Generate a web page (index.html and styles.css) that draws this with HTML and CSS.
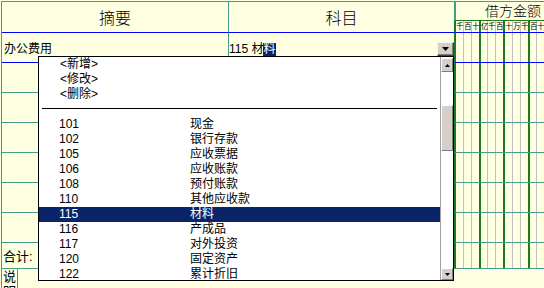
FILE: index.html
```html
<!DOCTYPE html>
<html lang="zh-CN">
<head>
<meta charset="utf-8">
<title>凭证录入</title>
<link rel="stylesheet" href="styles.css">
</head>
<body>
<div class="sheet">
  <div class="cell head c1">摘要</div>
  <div class="cell head c2">科目</div>
  <div class="amt-head">
    <div class="amt-title">借方金额</div>
    <div class="digits labels">
      <span>千</span><span>百</span><span>十</span><span>亿</span><span>千</span><span>百</span><span>十</span><span>万</span><span>千</span><span>百</span><span>十</span>
    </div>
  </div>

  <div class="cell first c1 text">办公费用</div>
  <div class="cell first c2 combo">
    <span class="combo-text">115 材<span class="mark">料</span></span>
    <span class="combo-btn"><svg width="7" height="4" viewBox="0 0 7 4"><polygon points="0,0 7,0 3.5,4" fill="#000"/></svg></span>
  </div>
  <div class="digits first"></div>

  <div class="cell c1"></div><div class="cell c2"></div><div class="digits"></div>
  <div class="cell c1"></div><div class="cell c2"></div><div class="digits"></div>
  <div class="cell c1"></div><div class="cell c2"></div><div class="digits"></div>
  <div class="cell c1"></div><div class="cell c2"></div><div class="digits"></div>
  <div class="cell c1"></div><div class="cell c2"></div><div class="digits"></div>
  <div class="cell c1"></div><div class="cell c2"></div><div class="digits"></div>

  <div class="cell c1 total">合计:</div>
  <div class="cell c2"></div>
  <div class="digits"></div>

  <div class="remark">
    <div class="remark-label">说明</div>
    <div class="remark-body"></div>
  </div>
</div>

<div class="dropdown">
  <div class="options">
    <div class="cmd">&lt;新增&gt;</div>
    <div class="cmd">&lt;修改&gt;</div>
    <div class="cmd">&lt;删除&gt;</div>
    <div class="sep"></div>
    <div class="item"><span class="code">101</span><span class="name">现金</span></div>
    <div class="item"><span class="code">102</span><span class="name">银行存款</span></div>
    <div class="item"><span class="code">105</span><span class="name">应收票据</span></div>
    <div class="item"><span class="code">106</span><span class="name">应收账款</span></div>
    <div class="item"><span class="code">108</span><span class="name">预付账款</span></div>
    <div class="item"><span class="code">110</span><span class="name">其他应收款</span></div>
    <div class="item selected"><span class="code">115</span><span class="name">材料</span></div>
    <div class="item"><span class="code">116</span><span class="name">产成品</span></div>
    <div class="item"><span class="code">117</span><span class="name">对外投资</span></div>
    <div class="item"><span class="code">120</span><span class="name">固定资产</span></div>
    <div class="item"><span class="code">122</span><span class="name">累计折旧</span></div>
  </div>
  <div class="scrollbar">
    <div class="sb-btn sb-up"><svg width="5" height="3" viewBox="0 0 5 3"><polygon points="0,3 5,3 2.5,0" fill="#000"/></svg></div>
    <div class="sb-track"><div class="sb-thumb"></div></div>
    <div class="sb-btn sb-down"><svg width="5" height="3" viewBox="0 0 5 3"><polygon points="0,0 5,0 2.5,3" fill="#000"/></svg></div>
  </div>
</div>
</body>
</html>
```

FILE: styles.css
```css
:root {
  --teal: #449c8c;
  --green: #1e781e;
  --blue: #0000ff;
  --thin: #c0c0c0;
  --paper: #ffffe1;
  --grid: linear-gradient(to right,
    transparent 0 7px, var(--thin) 7px 8px,
    transparent 8px 15px, var(--thin) 15px 16px,
    transparent 16px 23px, var(--green) 23px 25px,
    transparent 25px 31px, var(--thin) 31px 32px,
    transparent 32px 39px, var(--thin) 39px 40px,
    transparent 40px 47px, var(--green) 47px 49px,
    transparent 49px 56px, var(--thin) 56px 57px,
    transparent 57px 64px, var(--thin) 64px 65px,
    transparent 65px 72px, var(--green) 72px 74px,
    transparent 74px 80px, var(--thin) 80px 81px,
    transparent 81px 88px, var(--thin) 88px 89px,
    transparent 89px);
}

* { box-sizing: border-box; }

html, body { margin: 0; padding: 0; }

body {
  width: 544px;
  height: 288px;
  overflow: hidden;
  background: var(--paper);
  color: #000;
  font-family: "Liberation Sans", "Noto Sans CJK SC", sans-serif;
}

.sheet {
  margin: 1px 0 0 1px;
  width: 543px;
  height: 287px;
  border-top: 1px solid var(--teal);
  border-left: 1px solid var(--teal);
  display: grid;
  grid-template-columns: 227px 225px 90px;
  grid-template-rows: 31px 30px repeat(6, 30px) 26px 1fr;
  overflow: hidden;
}

.cell { border-bottom: 1px solid var(--teal); min-width: 0; }
.c1 { border-right: 1px solid var(--teal); }

.head {
  border-bottom-color: var(--blue);
  display: flex;
  align-items: center;
  justify-content: center;
  font-size: 16px;
  font-weight: 300;
}

.first { border-bottom-color: var(--blue) !important; }

.text {
  display: flex;
  align-items: center;
  padding-left: 2px;
  font-size: 12px;
}

.combo {
  display: flex;
  align-items: center;
  font-size: 12px;
}

.combo-text { flex: 1; white-space: nowrap; }

.mark {
  display: inline-block;
  background: #0a246a;
  color: #fff;
  line-height: 13px;
  padding: 0 1px 0 0;
}

.combo-btn {
  align-self: flex-start;
  margin-top: 9px;
  width: 17px;
  height: 14px;
  background: #d4d0c8;
  border: 1px solid;
  border-color: #f4f4f4 #404040 #404040 #f4f4f4;
  box-shadow: inset -1px -1px 0 #808080;
  display: flex;
  align-items: center;
  justify-content: center;
}

.amt-head { display: flex; flex-direction: column; min-width: 0; }

.amt-title {
  height: 19px;
  border-left: 2px solid var(--teal);
  border-bottom: 1px solid var(--green);
  padding-left: 29px;
  font-size: 14px;
  font-weight: 300;
  line-height: 18px;
  white-space: nowrap;
  overflow: hidden;
}

.digits {
  border-left: 2px solid var(--green);
  border-bottom: 1px solid var(--teal);
  background-image: var(--grid);
  min-width: 0;
}

.labels {
  flex: 1;
  border-bottom-color: var(--blue);
  display: grid;
  grid-template-columns: 8px 8px 9px 7px 8px 9px 8px 8px 9px 7px 8px;
  font-size: 7.5px;
  line-height: 11px;
  overflow: hidden;
}

.labels span { white-space: nowrap; overflow: hidden; }

.total {
  display: flex;
  align-items: center;
  padding-left: 1px;
  font-size: 13px;
}

.remark { grid-column: 1 / -1; display: flex; }

.remark-label {
  width: 16px;
  border-right: 1px solid var(--teal);
  padding-left: 1px;
  font-size: 13px;
  line-height: 15px;
  word-break: break-all;
  overflow: hidden;
}

.remark-body { flex: 1; }

/* dropdown list */
.dropdown {
  position: absolute;
  left: 38px;
  top: 56px;
  width: 416px;
  height: 225px;
  background: #fff;
  border: 1px solid #000;
  display: flex;
  font-size: 12px;
}

.options { flex: 1; overflow: hidden; }

.cmd {
  height: 15px;
  line-height: 15px;
  padding-left: 21px;
  white-space: nowrap;
}

.sep {
  height: 1px;
  background: #000;
  margin: 6px 3px 8px 3px;
}

.item {
  display: flex;
  height: 15px;
  line-height: 15px;
  white-space: nowrap;
}

.item .code { width: 151px; padding-left: 20px; }

.item.selected { background: #0a246a; color: #fff; }

.scrollbar {
  width: 13px;
  border-left: 1px solid #a0a0a0;
  display: flex;
  flex-direction: column;
}

.sb-btn {
  background: #d4d0c8;
  border: 1px solid;
  border-color: #fff #808080 #808080 #fff;
  display: flex;
  align-items: center;
  justify-content: center;
}

.sb-up { margin-top: 1px; height: 14px; }
.sb-down { height: 12px; }

.sb-track { flex: 1; }

.sb-thumb {
  margin-top: 33px;
  height: 46px;
  background: #d4d0c8;
  border: 1px solid;
  border-color: #fff #808080 #808080 #fff;
}
```
